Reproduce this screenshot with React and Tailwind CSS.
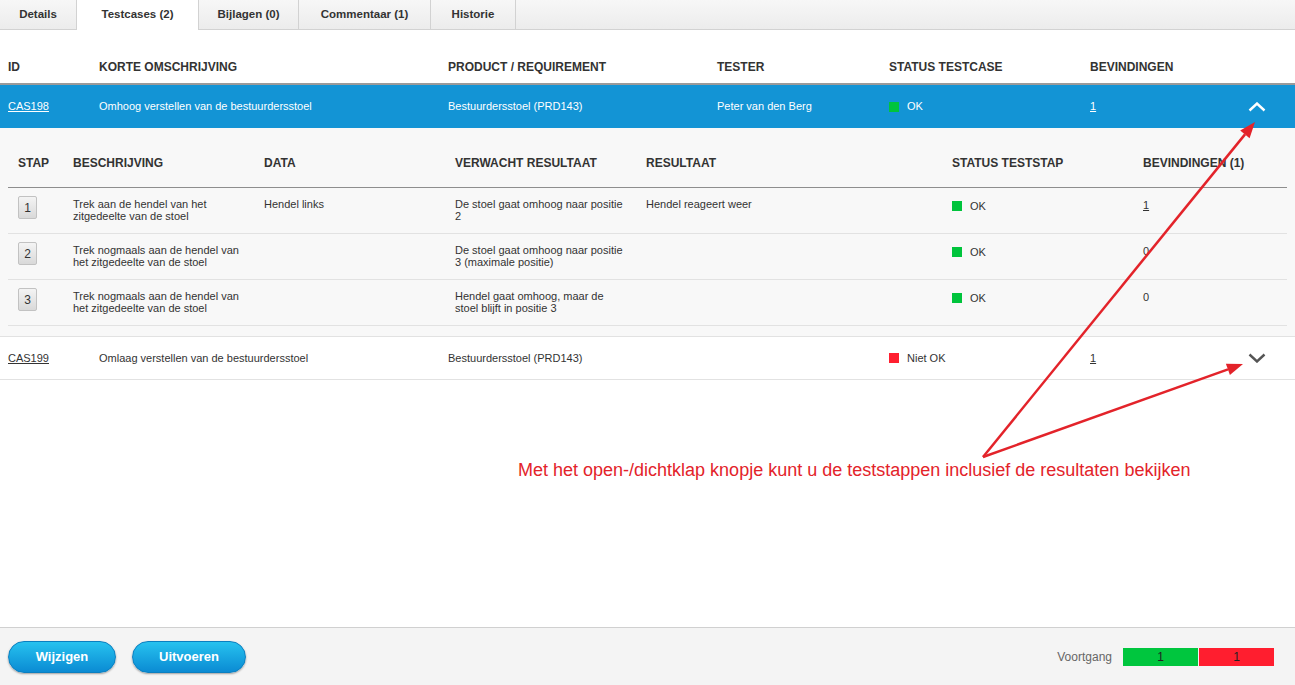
import React from 'react';

const tabs = [
  { label: 'Details', w: 'w-[77px]' },
  { label: 'Testcases (2)', w: 'w-[123px]', active: true },
  { label: 'Bijlagen (0)', w: 'w-[100px]' },
  { label: 'Commentaar (1)', w: 'w-[132px]' },
  { label: 'Historie', w: 'w-[85px]' },
];

const steps = [
  {
    nr: 1,
    desc: ['Trek aan de hendel van het', 'zitgedeelte van de stoel'],
    data: 'Hendel links',
    expected: ['De stoel gaat omhoog naar positie', '2'],
    result: 'Hendel reageert weer',
    findings: '1',
    link: true,
  },
  {
    nr: 2,
    desc: ['Trek nogmaals aan de hendel van', 'het zitgedeelte van de stoel'],
    data: '',
    expected: ['De stoel gaat omhoog naar positie', '3 (maximale positie)'],
    result: '',
    findings: '0',
  },
  {
    nr: 3,
    desc: ['Trek nogmaals aan de hendel van', 'het zitgedeelte van de stoel'],
    data: '',
    expected: ['Hendel gaat omhoog, maar de', 'stoel blijft in positie 3'],
    result: '',
    findings: '0',
  },
];

const caseCols = 'grid grid-cols-[91px_349px_269px_172px_201px_1fr] pl-2';
const stepCols = 'grid grid-cols-[65px_191px_191px_191px_306px_191px_1fr]';

const Chevron = ({ up, className }) => (
  <svg width="18" height="10" viewBox="0 0 18 10" className={className}>
    <polyline
      points={up ? '1.5,8.5 9,1.5 16.5,8.5' : '1.5,1.5 9,8.5 16.5,1.5'}
      fill="none"
      stroke="currentColor"
      strokeWidth="2.4"
    />
  </svg>
);

const Status = ({ ok }) => (
  <div className="flex items-center">
    <span className={`w-[10px] h-[10px] mr-2 ${ok ? 'bg-[#00c43c]' : 'bg-[#ff1f30]'}`}></span>
    {ok ? 'OK' : 'Niet OK'}
  </div>
);

export default function App() {
  return (
    <div className="relative w-[1295px] h-[685px] flex flex-col bg-white text-[#333] font-['Liberation_Sans',Arial,sans-serif] overflow-hidden">
      {/* tabs */}
      <div className="h-[30px] flex bg-gradient-to-b from-[#f7f7f7] to-[#ececec] border-b border-[#d2d2d2] shrink-0">
        {tabs.map((t) => (
          <div
            key={t.label}
            className={`${t.w} flex items-center justify-center text-[11.5px] font-bold border-r border-[#d2d2d2] ${
              t.active ? 'bg-white h-[30px] border-l -ml-px' : ''
            }`}
          >
            {t.label}
          </div>
        ))}
      </div>

      <div className="flex-1 flex flex-col">
        {/* case header */}
        <div className={`${caseCols} mt-[20px] h-[35px] items-center text-[12px] font-bold border-b-2 border-[#9a9a9a]`}>
          <div>ID</div>
          <div>KORTE OMSCHRIJVING</div>
          <div>PRODUCT / REQUIREMENT</div>
          <div>TESTER</div>
          <div>STATUS TESTCASE</div>
          <div>BEVINDINGEN</div>
        </div>

        {/* case CAS198 - open */}
        <div className={`${caseCols} h-[43px] items-center bg-[#1394d5] text-white text-[11px]`}>
          <div className="underline">CAS198</div>
          <div>Omhoog verstellen van de bestuurdersstoel</div>
          <div>Bestuurdersstoel (PRD143)</div>
          <div>Peter van den Berg</div>
          <Status ok />
          <div className="flex items-center justify-between pr-[29px]">
            <span className="underline">1</span>
            <Chevron up className="text-white" />
          </div>
        </div>

        {/* steps */}
        <div className="bg-[#f8f8f8] px-2 pt-[10px] pb-[10px] border-b border-[#e2e2e2]">
          <div className={`${stepCols} h-[50px] items-center text-[12px] font-bold border-b border-[#8e8e8e]`}>
            <div className="pl-[10px]">STAP</div>
            <div>BESCHRIJVING</div>
            <div>DATA</div>
            <div>VERWACHT RESULTAAT</div>
            <div>RESULTAAT</div>
            <div>STATUS TESTSTAP</div>
            <div>BEVINDINGEN (1)</div>
          </div>
          {steps.map((s) => (
            <div key={s.nr} className={`${stepCols} h-[46px] text-[11px] leading-[12px] border-b border-[#e2e2e2]`}>
              <div className="pl-[10px] pt-[8px]">
                <div className="w-[19px] h-[23px] flex items-center justify-center text-[12px] rounded-[2px] border border-[#c2c2c2] bg-gradient-to-b from-[#f4f4f4] to-[#d9d9d9]">
                  {s.nr}
                </div>
              </div>
              <div className="pt-[10px]">
                {s.desc[0]}
                <br />
                {s.desc[1]}
              </div>
              <div className="pt-[10px]">{s.data}</div>
              <div className="pt-[10px]">
                {s.expected[0]}
                <br />
                {s.expected[1]}
              </div>
              <div className="pt-[10px]">{s.result}</div>
              <div className="pt-[12px]">
                <Status ok />
              </div>
              <div className="pt-[11px]">
                <span className={s.link ? 'underline' : ''}>{s.findings}</span>
              </div>
            </div>
          ))}
        </div>

        {/* case CAS199 - closed */}
        <div className={`${caseCols} h-[43px] items-center text-[11px] border-b border-[#e2e2e2]`}>
          <div className="underline">CAS199</div>
          <div>Omlaag verstellen van de bestuurdersstoel</div>
          <div>Bestuurdersstoel (PRD143)</div>
          <div></div>
          <Status ok={false} />
          <div className="flex items-center justify-between pr-[29px]">
            <span className="underline">1</span>
            <Chevron className="text-[#555]" />
          </div>
        </div>
      </div>

      {/* footer */}
      <div className="h-[58px] shrink-0 flex items-center justify-between px-2 bg-[#f4f4f4] border-t border-[#d0d0d0]">
        <div className="flex gap-4">
          {['Wijzigen', 'Uitvoeren'].map((b, i) => (
            <button
              key={b}
              className={`${i === 0 ? 'w-[108px]' : 'w-[114px]'} h-[32px] rounded-full border border-[#0b7fc0] bg-gradient-to-b from-[#27c2ef] to-[#0b8bd3] text-white text-[13px] font-bold shadow-[0_1px_2px_rgba(0,0,0,0.35)]`}
            >
              {b}
            </button>
          ))}
        </div>
        <div className="flex items-center pr-[13px]">
          <span className="text-[12px] text-[#666] mr-[11px]">Voortgang</span>
          <div className="flex gap-px">
            <div className="w-[75px] h-[18px] bg-[#00c63e] flex items-center justify-center text-[12px] text-[#222]">1</div>
            <div className="w-[75px] h-[18px] bg-[#ff1e2f] flex items-center justify-center text-[12px] text-[#222]">1</div>
          </div>
        </div>
      </div>

      {/* annotation */}
      <svg className="absolute inset-0 pointer-events-none" width="1295" height="685">
        <line x1="983" y1="457" x2="1245" y2="134.4" stroke="#e3232a" strokeWidth="2.5" />
        <polygon points="1255,122 1249.6,138.2 1240.2,130.6" fill="#e3232a" />
        <line x1="983" y1="457" x2="1228" y2="369.4" stroke="#e3232a" strokeWidth="2.5" />
        <polygon points="1243,364 1229.9,375 1225.9,363.7" fill="#e3232a" />
      </svg>
      <div className="absolute left-[518px] top-[459px] text-[18px] leading-[22px] text-[#e3232a] whitespace-nowrap">
        Met het open-/dichtklap knopje kunt u de teststappen inclusief de resultaten bekijken
      </div>
    </div>
  );
}
